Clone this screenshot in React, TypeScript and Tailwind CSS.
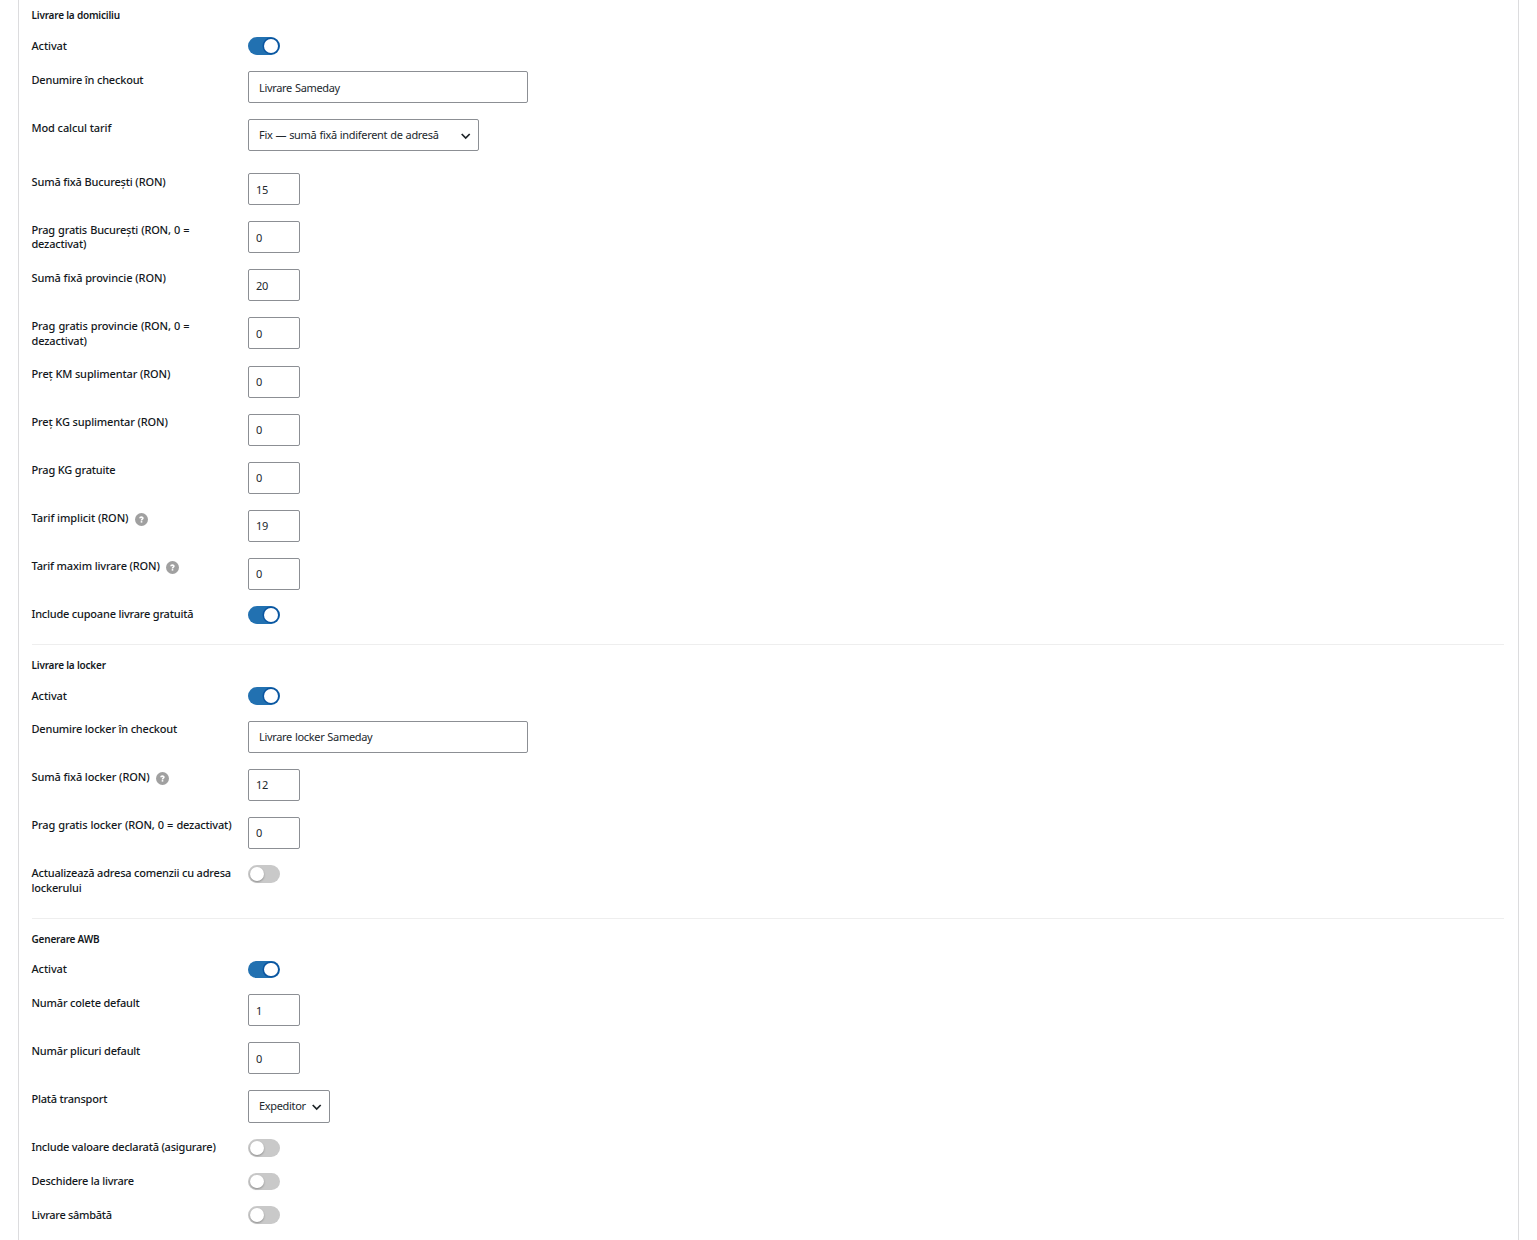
import React from 'react';

type Field = {
    label: string;
    type: 'toggle' | 'text' | 'number' | 'select';
    value?: string;
    on?: boolean;
    help?: boolean;
    labelClass?: string;
    rowClass?: string;
    controlClass?: string;
};

type Section = { title: string; className: string; headClass: string; fields: Field[] };

const sections: Section[] = [
    {
        title: 'Livrare la domiciliu',
        className: '',
        headClass: 'h-[37.42px] pt-[8px]',
        fields: [
            { label: 'Activat', type: 'toggle', on: true, labelClass: 'tracking-[-0.1px]' },
            { label: 'Denumire în checkout', type: 'text', value: 'Livrare Sameday', labelClass: 'tracking-[-0.2px]' },
            { label: 'Mod calcul tarif', type: 'select', value: 'Fix — sumă fixă indiferent de adresă', labelClass: 'tracking-[-0.1px]', rowClass: 'h-[38.1px]', controlClass: 'h-8 w-[231px]' },
            { label: 'Sumă fixă București (RON)', type: 'number', value: '15', labelClass: 'tracking-[-0.16px]' },
            { label: 'Prag gratis București (RON, 0 = dezactivat)', type: 'number', value: '0', labelClass: 'tracking-[-0.2px] [word-spacing:0.5px]' },
            { label: 'Sumă fixă provincie (RON)', type: 'number', value: '20', labelClass: 'tracking-[-0.09px]' },
            { label: 'Prag gratis provincie (RON, 0 = dezactivat)', type: 'number', value: '0', labelClass: 'tracking-[-0.14px] [word-spacing:0.5px]' },
            { label: 'Preț KM suplimentar (RON)', type: 'number', value: '0', labelClass: 'tracking-[-0.13px]' },
            { label: 'Preț KG suplimentar (RON)', type: 'number', value: '0', labelClass: 'tracking-[-0.14px]' },
            { label: 'Prag KG gratuite', type: 'number', value: '0', labelClass: 'tracking-[-0.18px]' },
            { label: 'Tarif implicit (RON)', type: 'number', value: '19', help: true, labelClass: 'tracking-[-0.08px]' },
            { label: 'Tarif maxim livrare (RON)', type: 'number', value: '0', help: true, labelClass: 'tracking-[-0.15px]', rowClass: 'h-8' },
            { label: 'Include cupoane livrare gratuită', type: 'toggle', on: true, labelClass: 'tracking-[-0.21px]' },
        ],
    },
    {
        title: 'Livrare la locker',
        className: 'mt-[20.25px] border-t border-[#eeeeee]',
        headClass: 'h-[42.3px] pt-[13px]',
        fields: [
            { label: 'Activat', type: 'toggle', on: true, labelClass: 'tracking-[-0.1px]' },
            { label: 'Denumire locker în checkout', type: 'text', value: 'Livrare locker Sameday', labelClass: 'tracking-[-0.2px]' },
            { label: 'Sumă fixă locker (RON)', type: 'number', value: '12', help: true, labelClass: 'tracking-[-0.12px]' },
            { label: 'Prag gratis locker (RON, 0 = dezactivat)', type: 'number', value: '0', labelClass: 'tracking-[-0.17px] [word-spacing:0.5px]' },
            { label: 'Actualizează adresa comenzii cu adresa lockerului', type: 'toggle', labelClass: 'tracking-[-0.2px]', rowClass: 'h-[32.6px]' },
        ],
    },
    {
        title: 'Generare AWB',
        className: 'mt-[20.15px] border-t border-[#eeeeee]',
        headClass: 'h-[42px] pt-[13px]',
        fields: [
            { label: 'Activat', type: 'toggle', on: true, labelClass: 'tracking-[-0.1px]' },
            { label: 'Număr colete default', type: 'number', value: '1', labelClass: 'tracking-[-0.19px]' },
            { label: 'Număr plicuri default', type: 'number', value: '0', labelClass: 'tracking-[-0.19px]' },
            { label: 'Plată transport', type: 'select', value: 'Expeditor', labelClass: 'tracking-[-0.22px]', rowClass: 'h-[32.5px]', controlClass: 'h-[32.5px] w-[82px]' },
            { label: 'Include valoare declarată (asigurare)', type: 'toggle', labelClass: 'tracking-[-0.22px]' },
            { label: 'Deschidere la livrare', type: 'toggle', labelClass: 'tracking-[-0.22px]' },
            { label: 'Livrare sâmbătă', type: 'toggle', labelClass: 'tracking-[-0.3px]' },
        ],
    },
];

const Toggle: React.FC<{ on?: boolean }> = ({ on }) => (
    <button
        type="button"
        role="switch"
        aria-checked={!!on}
        className={`flex h-[17.6px] w-8 items-center rounded-full px-[2px] ${on ? 'justify-end bg-[#2271b1]' : 'justify-start bg-[#c9c9c9]'}`}
    >
        <span className={`h-[13.6px] w-[13.6px] rounded-full bg-white ${on ? 'shadow-[0_0_0_1.5px_#0a55a0]' : 'shadow-[0_1px_2px_rgba(0,0,0,0.3)]'}`} />
    </button>
);

const HelpTip: React.FC = () => (
    <svg className="ml-[6.5px] mt-[2px] h-[13px] w-[13px] shrink-0" viewBox="0 0 13 13">
        <circle cx="6.5" cy="6.5" r="6.5" fill="#a0a0a0" />
        <path d="M4.9 5.2C5 3.7 8 3.8 7.9 5.2C7.8 6.2 6.5 6.1 6.5 7.4" fill="none" stroke="#fff" strokeWidth="1.6" />
        <rect x="5.7" y="8.1" width="1.6" height="1.5" fill="#fff" />
    </svg>
);

const Control: React.FC<{ field: Field }> = ({ field }) => {
    const box = 'rounded-[2px] border border-[#8c8f94] bg-white text-[11px] text-[#22282d]';

    if (field.type === 'toggle') return <Toggle on={field.on} />;
    if (field.type === 'select') {
        return (
            <button type="button" className={`${box} ${field.controlClass} flex items-center justify-between pl-[10px] pr-[6.5px]`}>
                <span className="whitespace-nowrap tracking-[-0.32px] [word-spacing:0.5px]">{field.value}</span>
                <svg className="mt-[1.5px] h-3 w-3 shrink-0" viewBox="0 0 12 12" fill="none" stroke="#1d2327" strokeWidth="1.7">
                    <path d="M1.7 4L5.7 8L9.7 4" />
                </svg>
            </button>
        );
    }
    return (
        <input
            className={`${box} h-8 ${field.type === 'text' ? 'w-[280px] px-[10px] tracking-[-0.33px] [word-spacing:0.5px]' : 'w-[52px] px-[7px] tracking-[-0.2px]'}`}
            defaultValue={field.value}
        />
    );
};

const App: React.FC = () => {
    return (
        <div className="h-[1240px] overflow-hidden bg-white px-[18px] font-['Noto_Sans','Open_Sans',sans-serif] text-[11px] text-[#13181c]">
            <div className="h-full border-x border-[#dcdcde] pl-[12.5px] pr-[14px]">
                {sections.map(section => (
                    <section key={section.title} className={section.className}>
                        <h4 className={`${section.headClass} text-[10px] font-semibold leading-[14px] tracking-[-0.2px]`}>
                            <span>{section.title}</span>
                        </h4>
                        <div className="flex flex-col gap-4">
                            {section.fields.map(field => (
                                <div key={field.label} className={`flex items-start ${field.rowClass ?? (field.type === 'toggle' ? 'h-[17.6px]' : 'h-[32.1px]')}`}>
                                    <div className="flex w-[216.5px] pr-[10px] pt-[1.5px] font-medium leading-[14.65px]">
                                        <span className={field.labelClass}>{field.label}</span>
                                        {field.help && <HelpTip />}
                                    </div>
                                    <Control field={field} />
                                </div>
                            ))}
                        </div>
                    </section>
                ))}
            </div>
        </div>
    );
};

export default App;
